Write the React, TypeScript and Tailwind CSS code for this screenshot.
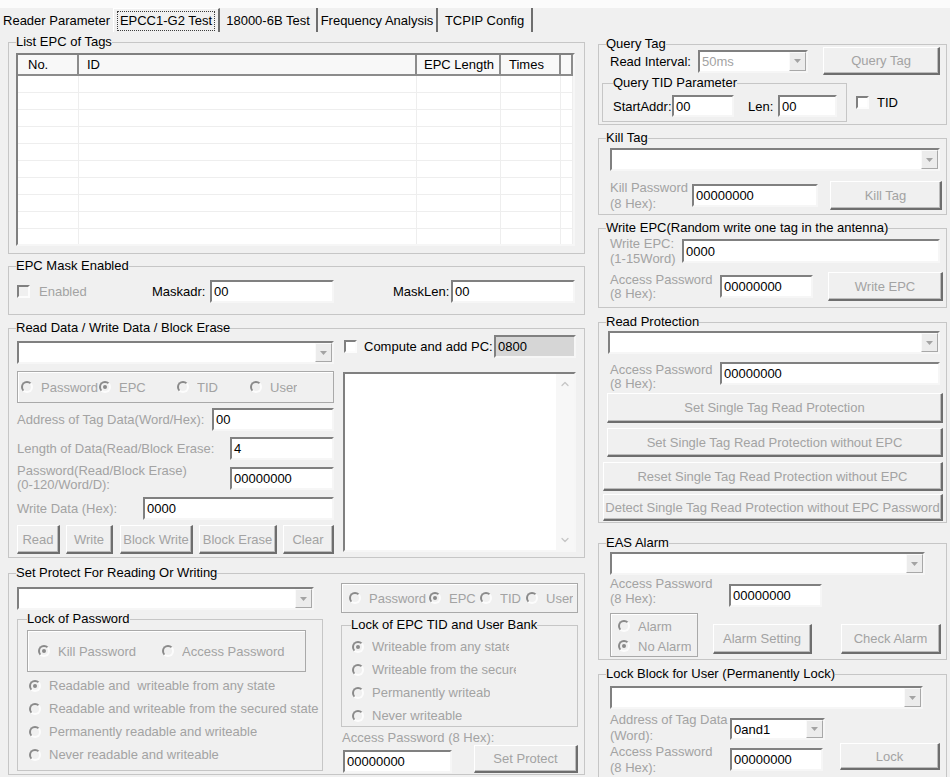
import { ChevronDown, ChevronUp } from "lucide-react";
import type { ReactNode } from "react";

const dim = "text-[#a3a3a3]";
const sunken =
    "border-2 border-t-[#808080] border-l-[#808080] border-r-[#f6f6f6] border-b-[#f6f6f6]";

function Group({
    title,
    className = "",
    legend = "ml-[7px]",
    children,
}: {
    title: string;
    className?: string;
    legend?: string;
    children?: ReactNode;
}) {
    return (
        <fieldset className={`border border-[#c6c6c6] ${className}`}>
            <legend className={`whitespace-nowrap leading-[14px] text-black ${legend}`}>
                {title}
            </legend>
            {children}
        </fieldset>
    );
}

function Edit({
    value = "",
    className = "",
    bg = "bg-white",
}: {
    value?: string;
    className?: string;
    bg?: string;
}) {
    return (
        <div
            className={`flex shrink-0 items-center overflow-hidden whitespace-nowrap pl-[2px] leading-none text-black ${sunken} ${bg} ${className}`}
        >
            {value}
        </div>
    );
}

function Combo({
    value = "",
    className = "",
    muted = false,
}: {
    value?: string;
    className?: string;
    muted?: boolean;
}) {
    return (
        <div className={`flex shrink-0 bg-white ${sunken} ${className}`}>
            <div
                className={`flex flex-1 items-center pl-[2px] leading-none ${muted ? dim : "text-black"}`}
            >
                {value}
            </div>
            <div className="flex w-[17px] items-center justify-center border border-t-[#fafafa] border-l-[#fafafa] border-r-[#a8a8a8] border-b-[#a8a8a8] bg-[#ececec]">
                <svg width="7" height="4" viewBox="0 0 7 4">
                    <path d="M0 0h7L3.5 4z" fill="#a3a3a3" />
                </svg>
            </div>
        </div>
    );
}

function Btn({ label, className = "" }: { label: string; className?: string }) {
    return (
        <div
            className={`flex shrink-0 items-center justify-center whitespace-nowrap border-t border-l border-r-2 border-b-2 border-t-white border-l-white border-r-[#6e6e6e] border-b-[#6e6e6e] bg-[#f0f0f0] shadow-[inset_-1px_-1px_0_#bcbcbc] ${dim} ${className}`}
        >
            {label}
        </div>
    );
}

function Radio({ on = false }: { on?: boolean }) {
    return (
        <span className="flex h-[12px] w-[12px] shrink-0 items-center justify-center rounded-full border-2 border-t-[#8a8a8a] border-l-[#8a8a8a] border-r-[#fcfcfc] border-b-[#fcfcfc] bg-[#f0f0f0]">
            {on && <span className="h-[4px] w-[4px] rounded-full bg-[#8a8a8a]" />}
        </span>
    );
}

function Opt({
    label,
    on = false,
    className = "",
    text = "",
}: {
    label: string;
    on?: boolean;
    className?: string;
    text?: string;
}) {
    return (
        <div className={`flex shrink-0 items-center ${className}`}>
            <Radio on={on} />
            <span className={`ml-[8px] overflow-hidden whitespace-pre ${dim} ${text}`}>
                {label}
            </span>
        </div>
    );
}

function Check({ bg = "bg-white", className = "" }: { bg?: string; className?: string }) {
    return (
        <span
            className={`block h-[13px] w-[13px] shrink-0 border-2 border-t-[#808080] border-l-[#808080] border-r-[#fcfcfc] border-b-[#fcfcfc] ${bg} ${className}`}
        />
    );
}

function Label2({
    a,
    b,
    className = "",
}: {
    a: string;
    b: string;
    className?: string;
}) {
    return (
        <div className={`shrink-0 whitespace-nowrap ${dim} ${className}`}>
            <div>{a}</div>
            <div>{b}</div>
        </div>
    );
}

function Tabs() {
    return (
        <div className="flex h-[24px]">
            <div className="flex w-[113px] items-center justify-center">
                Reader Parameter
            </div>
            <div className="flex w-[107px] items-center justify-center border-l border-t border-l-white border-t-white border-r-2 border-r-[#6e6e6e]">
                <span className="flex h-[20px] w-[98px] items-center justify-center border border-dotted border-[#3c3c3c]">
                    EPCC1-G2 Test
                </span>
            </div>
            <div className="flex w-[98px] items-center justify-center border-r-2 border-r-[#6e6e6e]">
                18000-6B Test
            </div>
            <div className="flex w-[120px] items-center justify-center border-r-2 border-r-[#6e6e6e]">
                Frequency Analysis
            </div>
            <div className="flex w-[95px] items-center justify-center border-r-2 border-r-[#6e6e6e]">
                TCPIP Config
            </div>
        </div>
    );
}

const listCols = ["w-[61px]", "w-[338px]", "w-[84px]", "w-[60px]", "flex-1"];
const listHeads = ["No.", "ID", "EPC Length", "Times", ""];
const listPads = ["pl-[10px]", "pl-[8px]", "pl-[7px]", "pl-[8px]", ""];

function ListView() {
    return (
        <div className={`h-[193px] w-[559px] overflow-hidden bg-white ${sunken}`}>
            <div className="flex h-[21px]">
                {listHeads.map((h, i) => (
                    <div
                        key={i}
                        className={`${listCols[i]} ${listPads[i]} flex items-center border-r-2 border-b-2 border-r-[#8c8c8c] border-b-[#8c8c8c] bg-[#f8f8f8]`}
                    >
                        {h}
                    </div>
                ))}
            </div>
            {Array.from({ length: 10 }).map((_, r) => (
                <div key={r} className="flex h-[17px] border-b border-[#eeeeee]">
                    {listCols.map((c, i) => (
                        <div key={i} className={`${c} border-r border-[#eeeeee]`} />
                    ))}
                </div>
            ))}
        </div>
    );
}

function LeftColumn() {
    return (
        <div className="w-[577px] shrink-0">
            <Group title="List EPC of Tags" className="mt-[3px] h-[219px] w-[577px]">
                <div className="pl-[7px] pt-[4px]">
                    <ListView />
                </div>
            </Group>

            <Group title="EPC Mask Enabled" className="mt-[5px] h-[56px] w-[577px]">
                <div className="flex h-[30px] items-end">
                    <div className="flex h-[23px] items-center">
                        <Check bg="bg-[#f0f0f0]" className="ml-[8px]" />
                        <span className={`ml-[9px] w-[113px] ${dim}`}>Enabled</span>
                        <span className="w-[58px]">Maskadr:</span>
                        <Edit value="00" className="h-[23px] w-[124px]" />
                        <span className="ml-[59px] w-[58px]">MaskLen:</span>
                        <Edit value="00" className="h-[23px] w-[124px]" />
                    </div>
                </div>
            </Group>

            <Group
                title="Read Data / Write Data / Block Erase"
                className="mt-[6px] h-[237px] w-[577px]"
            >
                <div className="flex">
                    <div className="ml-[8px] w-[317px] pt-[6px]">
                        <Combo className="h-[23px] w-[317px]" />
                        <div className="mt-[7px] flex h-[32px] items-center border border-[#a9a9a9] shadow-[inset_1px_1px_0_#ffffff]">
                            <Opt label="Password" className="ml-[3px] w-[78px]" />
                            <Opt label="EPC" on className="w-[78px]" />
                            <Opt label="TID" className="w-[73px]" />
                            <Opt label="User" />
                        </div>
                        <div className="mt-[4px] flex h-[24px] items-center">
                            <span className={`w-[195px] whitespace-nowrap ${dim}`}>
                                Address of Tag Data(Word/Hex):
                            </span>
                            <Edit value="00" className="h-[23px] w-[122px]" />
                        </div>
                        <div className="mt-[6px] flex h-[23px] items-center">
                            <span className={`w-[213px] whitespace-nowrap ${dim}`}>
                                Length of Data(Read/Block Erase:
                            </span>
                            <Edit value="4" className="h-[23px] w-[104px]" />
                        </div>
                        <div className="mt-[2px] flex h-[32px] items-center">
                            <Label2
                                a="Password(Read/Block Erase)"
                                b="(0-120/Word/D):"
                                className="w-[213px] leading-[14px]"
                            />
                            <Edit value="00000000" className="h-[23px] w-[104px]" />
                        </div>
                        <div className="mt-[3px] flex h-[23px] items-center">
                            <span className={`w-[126px] whitespace-nowrap ${dim}`}>
                                Write Data (Hex):
                            </span>
                            <Edit value="0000" className="h-[23px] w-[191px]" />
                        </div>
                        <div className="mt-[5px] flex h-[29px]">
                            <Btn label="Read" className="w-[43px]" />
                            <Btn label="Write" className="ml-[6px] w-[47px]" />
                            <Btn label="Block Write" className="ml-[7px] w-[73px]" />
                            <Btn label="Block Erase" className="ml-[6px] w-[78px]" />
                            <Btn label="Clear" className="ml-[6px] w-[51px]" />
                        </div>
                    </div>

                    <div className="ml-[9px] w-[233px]">
                        <div className="flex h-[23px] items-center">
                            <Check className="ml-[1px]" />
                            <span className="ml-[7px] w-[130px] whitespace-nowrap">
                                Compute and add PC:
                            </span>
                            <Edit value="0800" bg="bg-[#d6d6d6]" className="h-[23px] w-[82px]" />
                        </div>
                        <div className={`mt-[14px] flex h-[180px] w-[233px] bg-white ${sunken}`}>
                            <div className="flex-1" />
                            <div className="flex w-[18px] flex-col items-center justify-between bg-[#f7f7f7] py-[4px]">
                                <ChevronUp size={12} strokeWidth={2.5} className="text-[#c6c6c6]" />
                                <ChevronDown size={12} strokeWidth={2.5} className="text-[#c6c6c6]" />
                            </div>
                        </div>
                    </div>
                </div>
            </Group>

            <Group
                title="Set Protect For Reading Or Writing"
                className="mt-[8px] h-[209px] w-[577px]"
            >
                <div className="flex">
                    <div className="ml-[8px] w-[306px] pt-[7px]">
                        <Combo className="h-[23px] w-[297px]" />
                        <Group
                            title="Lock of Password"
                            legend="ml-[9px]"
                            className="mt-[2px] h-[159px] w-[306px]"
                        >
                            <div className="pl-[9px] pt-[4px]">
                                <div className="flex h-[42px] w-[279px] items-center border border-[#a9a9a9] shadow-[inset_1px_1px_0_#ffffff]">
                                    <Opt label="Kill Password" on className="ml-[10px] w-[124px]" />
                                    <Opt label="Access Password" />
                                </div>
                            </div>
                            <div className="mt-[2px] pl-[11px]">
                                <Opt label="Readable and  writeable from any state" on className="h-[23px]" />
                                <Opt label="Readable and writeable from the secured state" className="h-[23px]" />
                                <Opt label="Permanently readable and writeable" className="h-[23px]" />
                                <Opt label="Never readable and writeable" className="h-[23px]" />
                            </div>
                        </Group>
                    </div>

                    <div className="ml-[18px] w-[237px] pt-[3px]">
                        <div className="flex h-[30px] items-center border border-[#a9a9a9] shadow-[inset_1px_1px_0_#ffffff]">
                            <Opt label="Password" className="ml-[7px] w-[80px]" />
                            <Opt label="EPC" on className="w-[51px]" />
                            <Opt label="TID" className="w-[46px]" />
                            <Opt label="User" />
                        </div>
                        <Group
                            title="Lock of EPC TID and User Bank"
                            legend="ml-[9px]"
                            className="mt-[5px] h-[109px] w-[237px]"
                        >
                            <div className="pl-[10px] pt-[3px]">
                                <Opt label="Writeable from any state" on text="w-[137px]" className="h-[23px]" />
                                <Opt label="Writeable from the secured state" text="w-[144px]" className="h-[23px]" />
                                <Opt label="Permanently writeable" text="w-[118px]" className="h-[23px]" />
                                <Opt label="Never writeable" className="h-[23px]" />
                            </div>
                        </Group>
                        <div className={`ml-[1px] mt-[4px] leading-[14px] ${dim}`}>
                            Access Password (8 Hex):
                        </div>
                        <div className="flex items-start">
                            <Edit value="00000000" className="ml-[2px] mt-[5px] h-[23px] w-[109px]" />
                            <Btn label="Set Protect" className="ml-[22px] h-[28px] w-[104px]" />
                        </div>
                    </div>
                </div>
            </Group>
        </div>
    );
}

function RightColumn() {
    return (
        <div className="ml-[13px] w-[349px] shrink-0">
            <Group title="Query Tag" className="mt-[5px] h-[88px] w-[349px]">
                <div className="-mt-[4px] flex h-[28px] items-center">
                    <span className="ml-[11px] w-[88px] whitespace-nowrap">Read Interval:</span>
                    <Combo value="50ms" muted className="h-[23px] w-[110px]" />
                    <Btn label="Query Tag" className="ml-[15px] h-[28px] w-[117px]" />
                </div>
                <div className="mt-[1px] flex items-start">
                    <Group
                        title="Query TID Parameter"
                        legend="ml-[10px]"
                        className="ml-[3px] h-[46px] w-[245px]"
                    >
                        <div className="flex h-[27px] items-end">
                            <div className="flex h-[22px] items-center">
                                <span className="ml-[10px] w-[59px]">StartAddr:</span>
                                <Edit value="00" className="h-[22px] w-[62px]" />
                                <span className="ml-[14px] w-[30px]">Len:</span>
                                <Edit value="00" className="h-[22px] w-[59px]" />
                            </div>
                        </div>
                    </Group>
                    <Check className="ml-[9px] mt-[20px]" />
                    <span className="ml-[8px] mt-[19px]">TID</span>
                </div>
            </Group>

            <Group title="Kill Tag" className="mt-[6px] h-[84px] w-[349px]">
                <div className="pt-[3px]">
                    <Combo className="ml-[11px] h-[23px] w-[330px]" />
                </div>
                <div className="mt-[10px] flex h-[29px] items-center">
                    <Label2 a="Kill Password" b="(8 Hex):" className="ml-[11px] w-[82px] leading-[16px]" />
                    <Edit value="00000000" className="h-[23px] w-[126px]" />
                    <Btn label="Kill Tag" className="ml-[12px] h-[29px] w-[112px]" />
                </div>
            </Group>

            <Group
                title="Write EPC(Random write one tag in the antenna)"
                className="mt-[6px] h-[87px] w-[349px]"
            >
                <div className="flex items-start">
                    <Label2 a="Write EPC:" b="(1-15Word)" className="ml-[11px] mt-[1px] w-[72px] leading-[15px]" />
                    <Edit value="0000" className="mt-[4px] h-[24px] w-[258px]" />
                </div>
                <div className="mt-[6px] flex h-[29px] items-center">
                    <Label2 a="Access Password" b="(8 Hex):" className="ml-[11px] w-[110px] leading-[14px]" />
                    <Edit value="00000000" className="h-[23px] w-[93px]" />
                    <Btn label="Write EPC" className="ml-[15px] h-[29px] w-[115px]" />
                </div>
            </Group>

            <Group title="Read Protection" className="mt-[7px] h-[208px] w-[349px]">
                <div className="pt-[2px]">
                    <Combo className="ml-[9px] h-[23px] w-[332px]" />
                </div>
                <div className="mt-[8px] flex items-start">
                    <Label2 a="Access Password" b="(8 Hex):" className="ml-[11px] mt-[1px] w-[110px] leading-[14px]" />
                    <Edit value="00000000" className="h-[23px] w-[220px]" />
                </div>
                <Btn label="Set Single Tag Read Protection" className="ml-[8px] mt-[2px] h-[30px] w-[336px]" />
                <Btn label="Set Single Tag Read Protection without EPC" className="ml-[8px] mt-[5px] h-[29px] w-[336px]" />
                <Btn label="Reset Single Tag Read Protection without EPC" className="ml-[4px] mt-[5px] h-[29px] w-[340px]" />
                <Btn label="Detect Single Tag Read Protection without EPC Password" className="ml-[4px] mt-[3px] h-[27px] w-[340px]" />
            </Group>

            <Group title="EAS Alarm" className="mt-[13px] h-[124px] w-[349px]">
                <div className="pt-[2px]">
                    <Combo className="ml-[11px] h-[23px] w-[315px]" />
                </div>
                <div className="mt-[1px] flex items-start">
                    <Label2 a="Access Password" b="(8 Hex):" className="ml-[11px] w-[119px] leading-[15px]" />
                    <Edit value="00000000" className="mt-[8px] h-[23px] w-[93px]" />
                </div>
                <div className="mt-[6px] flex items-start">
                    <div className="ml-[11px] h-[44px] w-[88px] border border-[#a9a9a9] pt-[2px] shadow-[inset_1px_1px_0_#ffffff]">
                        <Opt label="Alarm" className="h-[20px] pl-[7px]" />
                        <Opt label="No Alarm" on className="h-[20px] pl-[7px]" />
                    </div>
                    <Btn label="Alarm Setting" className="ml-[15px] mt-[11px] h-[30px] w-[99px]" />
                    <Btn label="Check Alarm" className="ml-[29px] mt-[11px] h-[30px] w-[100px]" />
                </div>
            </Group>

            <Group
                title="Lock Block for User (Permanently Lock)"
                className="mt-[7px] h-[120px] w-[349px]"
            >
                <div className="pt-[5px]">
                    <Combo className="ml-[11px] h-[23px] w-[313px]" />
                </div>
                <div className="mt-[3px] flex items-start">
                    <Label2 a="Address of Tag Data" b="(Word):" className="ml-[11px] w-[120px] leading-[16px]" />
                    <Combo value="0and1" className="mt-[6px] h-[22px] w-[95px]" />
                </div>
                <div className="-mt-[1px] flex items-start">
                    <Label2 a="Access Password" b="(8 Hex):" className="ml-[11px] mt-[1px] w-[120px] leading-[16px]" />
                    <Edit value="00000000" className="mt-[5px] h-[23px] w-[93px]" />
                    <Btn label="Lock" className="ml-[17px] h-[27px] w-[100px]" />
                </div>
            </Group>
        </div>
    );
}

export default function App() {
    return (
        <div className="h-[777px] w-[950px] overflow-hidden bg-[#f0f0f0] font-['Liberation_Sans',Arial,sans-serif] text-[13px] leading-[15px] text-black">
            <div className="h-[8px] bg-[#fbfbfb]" />
            <Tabs />
            <div className="flex pl-[8px]">
                <LeftColumn />
                <RightColumn />
            </div>
        </div>
    );
}
